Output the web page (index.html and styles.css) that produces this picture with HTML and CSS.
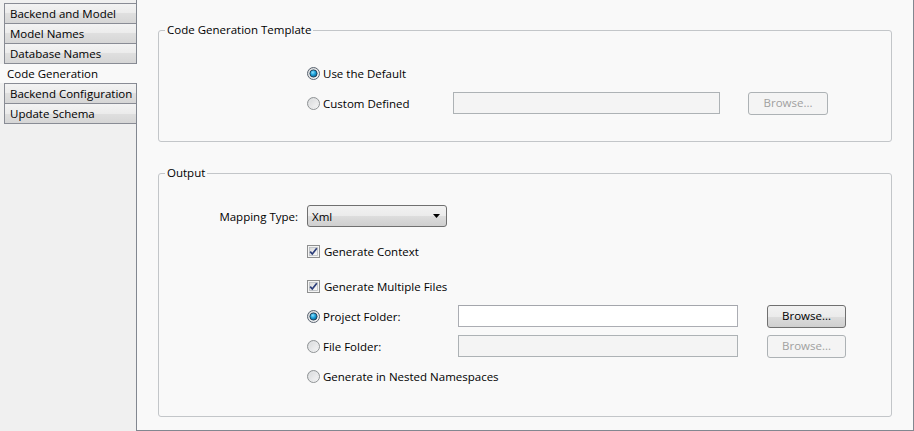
FILE: index.html
```
<!DOCTYPE html>
<html>
<head>
<meta charset="utf-8">
<link rel="stylesheet" href="styles.css">
</head>
<body>
<div class="window">
  <div class="tabs">
    <div class="tab">Backend and Model</div>
    <div class="tab">Model Names</div>
    <div class="tab before-selected">Database Names</div>
    <div class="tab selected">Code Generation</div>
    <div class="tab">Backend Configuration</div>
    <div class="tab last">Update Schema</div>
  </div>
  <div class="panel">
    <fieldset class="group group-template">
      <legend>Code Generation Template</legend>
      <div class="row">
        <div class="option">
          <svg class="radio" viewBox="0 0 13 13"><use href="#radio-on"/></svg>
          <span>Use the Default</span>
        </div>
      </div>
      <div class="row gap8 path-row-1">
        <div class="option">
          <svg class="radio" viewBox="0 0 13 13"><use href="#radio-off"/></svg>
          <span>Custom Defined</span>
        </div>
        <div class="textbox disabled"></div>
        <div class="button disabled">Browse...</div>
      </div>
    </fieldset>

    <fieldset class="group group-output">
      <legend>Output</legend>
      <div class="row mapping">
        <span class="field-label">Mapping Type:</span>
        <div class="combo"><span>Xml</span><svg class="arrow" viewBox="0 0 7 4"><path d="M0 0H7L3.5 4Z" fill="#000"/></svg></div>
      </div>
      <div class="row gap13">
        <div class="option">
          <svg class="check" viewBox="0 0 13 13"><use href="#check-on"/></svg>
          <span>Generate Context</span>
        </div>
      </div>
      <div class="row gap13">
        <div class="option">
          <svg class="check" viewBox="0 0 13 13"><use href="#check-on"/></svg>
          <span>Generate Multiple Files</span>
        </div>
      </div>
      <div class="row gap8 path-row-2">
        <div class="option">
          <svg class="radio" viewBox="0 0 13 13"><use href="#radio-on"/></svg>
          <span>Project Folder:</span>
        </div>
        <div class="textbox"></div>
        <div class="button">Browse...</div>
      </div>
      <div class="row gap8 path-row-2">
        <div class="option">
          <svg class="radio" viewBox="0 0 13 13"><use href="#radio-off"/></svg>
          <span>File Folder:</span>
        </div>
        <div class="textbox disabled"></div>
        <div class="button disabled">Browse...</div>
      </div>
      <div class="row gap8">
        <div class="option">
          <svg class="radio" viewBox="0 0 13 13"><use href="#radio-off"/></svg>
          <span>Generate in Nested Namespaces</span>
        </div>
      </div>
    </fieldset>
  </div>
</div>

<svg class="defs" width="0" height="0">
  <defs>
    <linearGradient id="rg" x1="0" y1="0" x2="1" y2="1">
      <stop offset="0" stop-color="#d2d4d6"/>
      <stop offset="1" stop-color="#fbfbfb"/>
    </linearGradient>
    <radialGradient id="bg" cx="0.4" cy="0.35" r="0.7">
      <stop offset="0" stop-color="#8ee0ff"/>
      <stop offset="0.5" stop-color="#1aa0d8"/>
      <stop offset="1" stop-color="#0a5a8a"/>
    </radialGradient>
    <linearGradient id="cg" x1="0" y1="0" x2="1" y2="1">
      <stop offset="0" stop-color="#d8d8d8"/>
      <stop offset="1" stop-color="#fcfcfc"/>
    </linearGradient>
    <g id="radio-off">
      <circle cx="6.5" cy="6.5" r="6" fill="url(#rg)" stroke="#8f9395"/>
      <circle cx="6.5" cy="6.5" r="4.2" fill="none" stroke="#e6e7e8" stroke-width="0.8"/>
    </g>
    <g id="radio-on">
      <circle cx="6.5" cy="6.5" r="6" fill="url(#rg)" stroke="#5a6470"/>
      <circle cx="6.5" cy="6.5" r="3.6" fill="url(#bg)" stroke="#1e3a52" stroke-width="0.9"/>
    </g>
    <g id="check-on">
      <rect x="0.5" y="0.5" width="12" height="12" fill="#f4f4f4" stroke="#8e8f8f"/>
      <rect x="2.5" y="2.5" width="8" height="8" fill="url(#cg)" stroke="#b8bcc0" stroke-width="0.8"/>
      <path d="M3.2 6.6 L5.3 9 L9.8 3.2" fill="none" stroke="#2c3e7a" stroke-width="1.7"/>
    </g>
  </defs>
</svg>
</body>
</html>
```
FILE: styles.css
```
* { box-sizing: border-box; }

body {
  margin: 0;
  font-family: "Open Sans", "Noto Sans", sans-serif;
  font-size: 11.5px;
  color: #000;
  background: #f0f0f0;
}

.defs { position: absolute; }

.window {
  display: flex;
  width: 914px;
  height: 431px;
}

.tabs {
  width: 136px;
  flex: none;
  padding-top: 3px;
  display: flex;
  flex-direction: column;
  background: #f0f0f0;
}

.tab {
  height: 20px;
  margin-left: 4px;
  padding-left: 5px;
  border-top: 1px solid #898c95;
  border-left: 1px solid #898c95;
  background: linear-gradient(#f3f3f3, #ebebeb 50%, #dfdfdf 50%, #d6d6d6);
  line-height: 19px;
  white-space: nowrap;
}

.tab.before-selected,
.tab.last {
  height: 21px;
  border-bottom: 1px solid #898c95;
}

.tab.selected {
  height: 19px;
  width: 137px;
  margin-left: 0;
  padding-left: 7px;
  border: none;
  background: #f9f9f9;
  position: relative;
  z-index: 1;
  line-height: 19px;
}

.panel {
  flex: 1;
  background: #f9f9f9;
  border-left: 1px solid #828790;
  border-right: 1px solid #828790;
  border-bottom: 1px solid #828790;
  padding: 22px 21px 0 21px;
}

.group {
  margin: 0;
  padding: 24px 0 27px 0;
  border: 1px solid #c3c6c9;
  border-radius: 3px;
}

.group legend {
  margin-left: 6px;
  padding: 0 2px;
  line-height: 16px;
}

.group-output {
  margin-top: 23px;
  padding-bottom: 29px;
}

.row {
  display: flex;
  align-items: center;
  height: 22px;
  padding-left: 148px;
}

.gap8 { margin-top: 8px; }
.gap13 { margin-top: 13px; }

.option {
  display: flex;
  align-items: center;
  gap: 3px;
  white-space: nowrap;
}

.radio, .check {
  width: 13px;
  height: 13px;
  flex: none;
}

.check + span { margin-left: 1px; }

.path-row-1 .option { width: 146px; }
.path-row-1 .textbox { width: 267px; }
.path-row-1 .button { width: 80px; margin-left: 28px; }

.path-row-2 .option { width: 151px; }
.path-row-2 .textbox { width: 280px; }
.path-row-2 .button { width: 79px; margin-left: 29px; }

.textbox {
  height: 22px;
  background: #fff;
  border: 1px solid #abadb3;
  border-top-color: #a4a6ac;
}

.textbox.disabled {
  background: #f4f4f4;
  border-color: #adb2b5;
}

.button {
  height: 23px;
  border: 1px solid #707070;
  border-radius: 3px;
  background: linear-gradient(#f2f2f2, #ebebeb 50%, #dddddd 50%, #cfcfcf);
  display: flex;
  align-items: center;
  justify-content: center;
  line-height: 1;
}

.button.disabled {
  background: #f4f4f4;
  border-color: #adb2b5;
  color: #a0a0a0;
}

.mapping {
  padding-left: 0;
}

.field-label {
  width: 148px;
  text-align: right;
  padding-right: 9px;
  white-space: nowrap;
}

.combo {
  width: 140px;
  height: 22px;
  border: 1px solid #707070;
  border-radius: 3px;
  background: linear-gradient(#f2f2f2, #ebebeb 50%, #dddddd 50%, #cfcfcf);
  display: flex;
  align-items: center;
  justify-content: space-between;
  padding: 0 6px 0 4px;
}

.arrow {
  width: 7px;
  height: 4px;
}
```
